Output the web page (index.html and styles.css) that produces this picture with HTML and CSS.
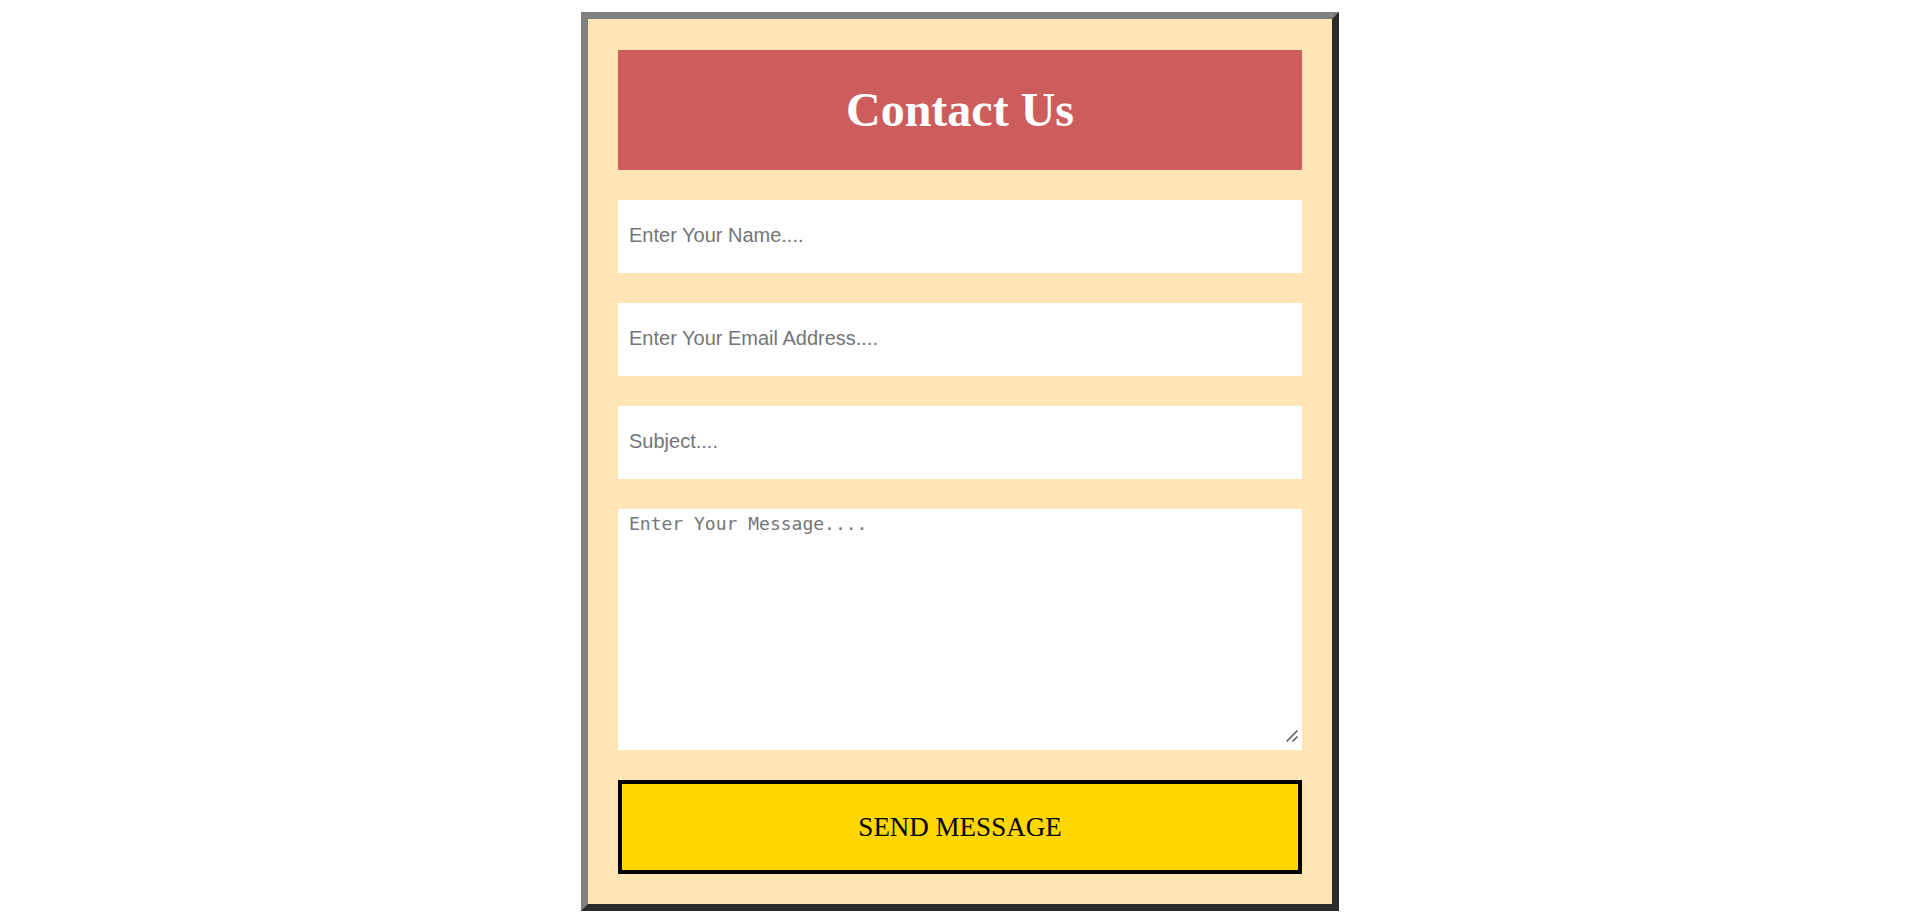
FILE: index.html
```html
<!DOCTYPE html>
<html lang="en">
<head>
<meta charset="utf-8">
<title>Contact Us</title>
<link rel="stylesheet" href="styles.css">
</head>
<body>
<form class="contact">
  <h1 class="title">Contact Us</h1>
  <input class="field" type="text" aria-label="Name" placeholder="Enter Your Name....">
  <input class="field" type="email" aria-label="Email address" placeholder="Enter Your Email Address....">
  <input class="field" type="text" aria-label="Subject" placeholder="Subject....">
  <div class="message-box">
    <textarea class="field message" aria-label="Message" placeholder="Enter Your Message...."></textarea>
    <svg class="grip" viewBox="0 0 12 12" aria-hidden="true"><path d="M0.5 11.5 11.5 0.5M6.5 11.5 11.5 6.5"/></svg>
  </div>
  <button class="send" type="submit">SEND MESSAGE</button>
</form>
</body>
</html>
```
FILE: styles.css
```css
* {
  box-sizing: border-box;
}

body {
  margin: 0;
  padding: 12px;
  font-family: "Liberation Serif", "Times New Roman", serif;
}

.contact {
  display: flex;
  flex-direction: column;
  gap: 30px;
  max-width: 758px;
  margin: 0 auto;
  padding: 31px 30px 30px;
  border: 7px outset #808080;
  background: moccasin;
}

.title {
  margin: 0;
  padding: 30px;
  background: indianred;
  color: white;
  font-size: 48px;
  line-height: 60px;
  text-align: center;
}

.field {
  display: block;
  width: 100%;
  height: 73px;
  padding: 4px 11px 6px;
  border: 0;
  background: white;
  font-family: "Liberation Sans", Arial, sans-serif;
  font-size: 20px;
}

.message-box {
  position: relative;
}

.message {
  height: 241px;
  resize: vertical;
  font-family: "DejaVu Sans Mono", Consolas, monospace;
  font-size: 18px;
}

.message::-webkit-resizer {
  background: transparent;
}

.grip {
  position: absolute;
  right: 4px;
  bottom: 8px;
  width: 12px;
  height: 12px;
  fill: none;
  stroke: #555;
  stroke-width: 1.5;
  pointer-events: none;
}

.send {
  height: 94px;
  border: 4px solid black;
  background: gold;
  color: black;
  font-family: inherit;
  font-size: 27px;
}
```
